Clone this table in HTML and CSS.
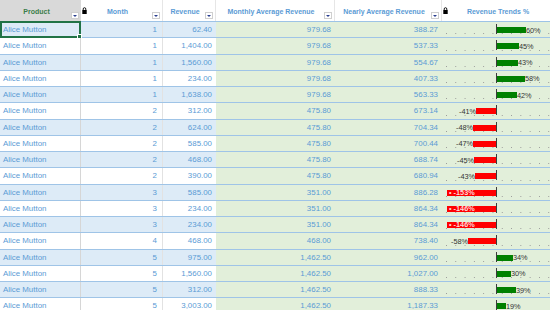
FILE: index.html
```html
<!DOCTYPE html>
<html>
<head>
<meta charset="utf-8">
<link rel="stylesheet" href="styles.css">
</head>
<body>
<div class="sheet">
  <div class="row head">
    <div class="hc prod"><span class="ht">Product</span><span class="dd"></span></div>
    <div class="hc"><svg class="lock" width="5" height="7" viewBox="0 0 5 7"><path d="M1.2 3.2V2a1.3 1.3 0 0 1 2.6 0v1.2" fill="none" stroke="#000" stroke-width="0.9"/><rect x="0.3" y="3" width="4.4" height="4" fill="#000"/></svg><span class="ht">Month</span><span class="dd"></span></div>
    <div class="hc"><span class="ht">Revenue</span><span class="dd"></span></div>
    <div class="hc"><span class="ht">Monthly Average Revenue</span><span class="dd"></span></div>
    <div class="hc"><span class="ht">Nearly Average Revenue</span><span class="dd"></span></div>
    <div class="hc trh"><svg class="lock" width="5" height="7" viewBox="0 0 5 7"><path d="M1.2 3.2V2a1.3 1.3 0 0 1 2.6 0v1.2" fill="none" stroke="#000" stroke-width="0.9"/><rect x="0.3" y="3" width="4.4" height="4" fill="#000"/></svg><span class="ht">Revenue Trends %</span></div>
  </div>

  <div class="row odd">
    <div class="c name">Alice Mutton<span class="sel"></span></div><div class="c mon">1</div><div class="c rev">62.40</div><div class="c avg">979.68</div><div class="c near">388.27</div>
    <div class="c tr"><div class="neg"></div><i class="axis"></i><div class="pos"><b class="bar g" style="width:29px"></b><span class="lb">60%</span></div></div>
  </div>
  <div class="row">
    <div class="c name">Alice Mutton</div><div class="c mon">1</div><div class="c rev">1,404.00</div><div class="c avg">979.68</div><div class="c near">537.33</div>
    <div class="c tr"><div class="neg"></div><i class="axis"></i><div class="pos"><b class="bar g" style="width:22px"></b><span class="lb">45%</span></div></div>
  </div>
  <div class="row odd">
    <div class="c name">Alice Mutton</div><div class="c mon">1</div><div class="c rev">1,560.00</div><div class="c avg">979.68</div><div class="c near">554.67</div>
    <div class="c tr"><div class="neg"></div><i class="axis"></i><div class="pos"><b class="bar g" style="width:21px"></b><span class="lb">43%</span></div></div>
  </div>
  <div class="row">
    <div class="c name">Alice Mutton</div><div class="c mon">1</div><div class="c rev">234.00</div><div class="c avg">979.68</div><div class="c near">407.33</div>
    <div class="c tr"><div class="neg"></div><i class="axis"></i><div class="pos"><b class="bar g" style="width:28px"></b><span class="lb">58%</span></div></div>
  </div>
  <div class="row odd">
    <div class="c name">Alice Mutton</div><div class="c mon">1</div><div class="c rev">1,638.00</div><div class="c avg">979.68</div><div class="c near">563.33</div>
    <div class="c tr"><div class="neg"></div><i class="axis"></i><div class="pos"><b class="bar g" style="width:20px"></b><span class="lb">42%</span></div></div>
  </div>
  <div class="row">
    <div class="c name">Alice Mutton</div><div class="c mon">2</div><div class="c rev">312.00</div><div class="c avg">475.80</div><div class="c near">673.14</div>
    <div class="c tr"><div class="neg"><span class="lb">-41%</span><b class="bar r" style="width:20px"></b></div><i class="axis"></i><div class="pos"></div></div>
  </div>
  <div class="row odd">
    <div class="c name">Alice Mutton</div><div class="c mon">2</div><div class="c rev">624.00</div><div class="c avg">475.80</div><div class="c near">704.34</div>
    <div class="c tr"><div class="neg"><span class="lb">-48%</span><b class="bar r" style="width:23px"></b></div><i class="axis"></i><div class="pos"></div></div>
  </div>
  <div class="row">
    <div class="c name">Alice Mutton</div><div class="c mon">2</div><div class="c rev">585.00</div><div class="c avg">475.80</div><div class="c near">700.44</div>
    <div class="c tr"><div class="neg"><span class="lb">-47%</span><b class="bar r" style="width:23px"></b></div><i class="axis"></i><div class="pos"></div></div>
  </div>
  <div class="row odd">
    <div class="c name">Alice Mutton</div><div class="c mon">2</div><div class="c rev">468.00</div><div class="c avg">475.80</div><div class="c near">688.74</div>
    <div class="c tr"><div class="neg"><span class="lb">-45%</span><b class="bar r" style="width:22px"></b></div><i class="axis"></i><div class="pos"></div></div>
  </div>
  <div class="row">
    <div class="c name">Alice Mutton</div><div class="c mon">2</div><div class="c rev">390.00</div><div class="c avg">475.80</div><div class="c near">680.94</div>
    <div class="c tr"><div class="neg"><span class="lb">-43%</span><b class="bar r" style="width:21px"></b></div><i class="axis"></i><div class="pos"></div></div>
  </div>
  <div class="row odd">
    <div class="c name">Alice Mutton</div><div class="c mon">3</div><div class="c rev">585.00</div><div class="c avg">351.00</div><div class="c near">886.28</div>
    <div class="c tr"><div class="neg"><b class="bar r" style="width:49px"><span class="in">&#8226; -153%</span></b></div><i class="axis"></i><div class="pos"></div></div>
  </div>
  <div class="row">
    <div class="c name">Alice Mutton</div><div class="c mon">3</div><div class="c rev">234.00</div><div class="c avg">351.00</div><div class="c near">864.34</div>
    <div class="c tr"><div class="neg"><b class="bar r" style="width:49px"><span class="in">&#8226; -146%</span></b></div><i class="axis"></i><div class="pos"></div></div>
  </div>
  <div class="row odd">
    <div class="c name">Alice Mutton</div><div class="c mon">3</div><div class="c rev">234.00</div><div class="c avg">351.00</div><div class="c near">864.34</div>
    <div class="c tr"><div class="neg"><b class="bar r" style="width:49px"><span class="in">&#8226; -146%</span></b></div><i class="axis"></i><div class="pos"></div></div>
  </div>
  <div class="row">
    <div class="c name">Alice Mutton</div><div class="c mon">4</div><div class="c rev">468.00</div><div class="c avg">468.00</div><div class="c near">738.40</div>
    <div class="c tr"><div class="neg"><span class="lb">-58%</span><b class="bar r" style="width:28px"></b></div><i class="axis"></i><div class="pos"></div></div>
  </div>
  <div class="row odd">
    <div class="c name">Alice Mutton</div><div class="c mon">5</div><div class="c rev">975.00</div><div class="c avg">1,462.50</div><div class="c near">962.00</div>
    <div class="c tr"><div class="neg"></div><i class="axis"></i><div class="pos"><b class="bar g" style="width:16px"></b><span class="lb">34%</span></div></div>
  </div>
  <div class="row">
    <div class="c name">Alice Mutton</div><div class="c mon">5</div><div class="c rev">1,560.00</div><div class="c avg">1,462.50</div><div class="c near">1,027.00</div>
    <div class="c tr"><div class="neg"></div><i class="axis"></i><div class="pos"><b class="bar g" style="width:14px"></b><span class="lb">30%</span></div></div>
  </div>
  <div class="row odd">
    <div class="c name">Alice Mutton</div><div class="c mon">5</div><div class="c rev">312.00</div><div class="c avg">1,462.50</div><div class="c near">888.33</div>
    <div class="c tr"><div class="neg"></div><i class="axis"></i><div class="pos"><b class="bar g" style="width:19px"></b><span class="lb">39%</span></div></div>
  </div>
  <div class="row">
    <div class="c name">Alice Mutton</div><div class="c mon">5</div><div class="c rev">3,003.00</div><div class="c avg">1,462.50</div><div class="c near">1,187.33</div>
    <div class="c tr"><div class="neg"></div><i class="axis"></i><div class="pos"><b class="bar g" style="width:9px"></b><span class="lb">19%</span></div></div>
  </div>
</div>
</body>
</html>
```

FILE: styles.css
```css
html, body {
  margin: 0;
  padding: 0;
  background: #ffffff;
  font-family: "Liberation Sans", Arial, sans-serif;
}

.sheet {
  width: 550px;
  height: 310px;
  overflow: hidden;
}

.row {
  display: grid;
  grid-template-columns: 81px 82px 53px 119px 107px 108px;
  height: 16.25px;
  box-sizing: border-box;
  border-bottom: 1px solid #9fc4e7;
}

.head {
  height: 22px;
  border-bottom: 1px solid #9dc3e6;
}

.hc {
  position: relative;
  display: flex;
  padding: 0 2px 2px 2px;
  border-right: 1px solid #e6e6e6;
  color: #5b9bd5;
  font-weight: bold;
  font-size: 7px;
}

.hc.prod {
  background: #d9d9d9;
  color: #3b7d4a;
  border-right: none;
}

.hc.trh {
  border-right: none;
  padding-left: 6px;
}

.ht {
  flex: 1;
  text-align: center;
  align-self: center;
  margin-top: 4px;
  white-space: nowrap;
}

.dd {
  align-self: flex-end;
  width: 8px;
  height: 7px;
  box-sizing: border-box;
  border: 1px solid #cfcfcf;
  background: #ffffff;
  display: flex;
  align-items: center;
  justify-content: center;
}

.dd::after {
  content: "";
  border-left: 2px solid transparent;
  border-right: 2px solid transparent;
  border-top: 2px solid #2a3f8f;
}

.lock {
  position: absolute;
  left: 1px;
  top: 7px;
}

.c {
  display: flex;
  align-items: center;
  justify-content: flex-end;
  padding: 0 4px;
  font-size: 7.9px;
  color: #5b9bd5;
  white-space: nowrap;
  overflow: hidden;
}

.c.name {
  position: relative;
  justify-content: flex-start;
  padding-left: 3px;
  border-right: 1px solid #d6d6d6;
  overflow: visible;
}

.c.mon {
  padding-right: 5px;
  border-right: 1px solid #e2e2e2;
}

.odd .name, .odd .mon, .odd .rev {
  background: #ddebf7;
}

.avg, .near, .tr {
  background: #e2efda;
}

.c.tr {
  justify-content: flex-start;
  align-items: flex-start;
  padding: 0 0 0 4px;
  background-color: #e2efda;
  background-image: linear-gradient(to right, #9a9a9a 1px, transparent 1px);
  background-size: 9.3px 1px;
  background-repeat: repeat-x;
  background-position: 4px calc(100% - 3px);
}

.neg {
  width: 50px;
  height: 10px;
  margin-top: 3px;
  display: flex;
  justify-content: flex-end;
  align-items: center;
}

.axis {
  display: block;
  width: 1px;
  height: 10px;
  margin-top: 2px;
  background: #3c3c3c;
}

.pos {
  height: 10px;
  margin-top: 3px;
  display: flex;
  align-items: center;
}

.bar {
  display: flex;
  align-items: center;
  height: 6px;
}

.g { background: #008000; }
.r { background: #ff0000; }

.lb {
  font-size: 7.3px;
  color: #333333;
}

.in {
  font-size: 7.3px;
  color: #ffd6d6;
  padding-left: 2px;
  line-height: 6px;
}

.sel {
  position: absolute;
  left: 0;
  top: -1px;
  right: -1px;
  bottom: -1px;
  border: 2px solid #217346;
}

.sel::after {
  content: "";
  position: absolute;
  right: -3px;
  bottom: -3px;
  width: 3px;
  height: 3px;
  background: #217346;
  border: 1px solid #ffffff;
}
```
